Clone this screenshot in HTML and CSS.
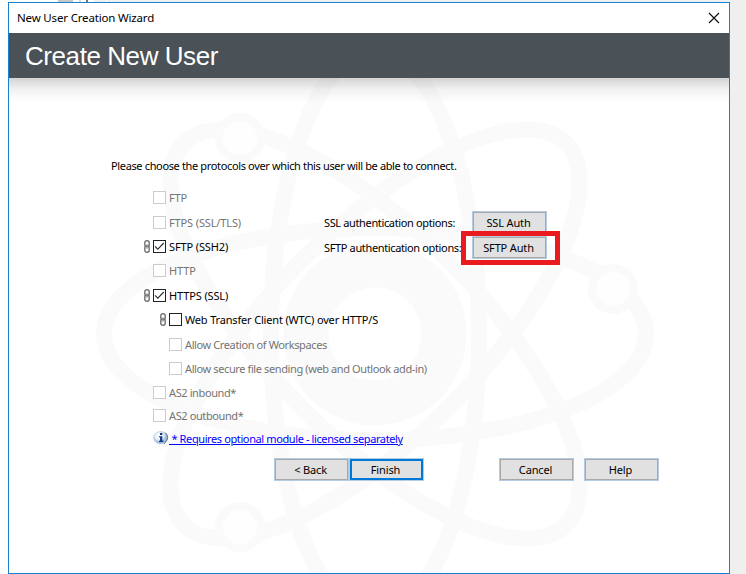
FILE: index.html
```html
<!DOCTYPE html>
<html lang="en">
<head>
<meta charset="utf-8">
<title>New User Creation Wizard</title>
<link rel="stylesheet" href="styles.css">
</head>
<body>
<div class="backdrop"><i class="chip"></i><i class="line"></i><i class="mark"></i><i class="pane"></i></div>
<main class="window">
  <div class="titlebar">
    <span class="caption">New User Creation Wizard</span>
    <svg class="close" width="12" height="12" viewBox="0 0 12 12"><path d="M1 1l10 10M11 1L1 11" stroke="#111" stroke-width="1.2" fill="none"/></svg>
  </div>
  <header class="banner"><h1>Create New User</h1></header>
  <div class="content">
    <svg class="atom" width="720" height="495" viewBox="9 78 720 495">
      <g fill="none" stroke="#fafafa" stroke-width="16">
        <ellipse cx="375" cy="334" rx="271" ry="106"/>
        <ellipse cx="375" cy="334" rx="270" ry="104" transform="rotate(45 375 334)"/>
        <ellipse cx="375" cy="334" rx="104" ry="283"/>
        <ellipse cx="375" cy="334" rx="270" ry="104" transform="rotate(135 375 334)"/>
      </g>
      <circle cx="375" cy="334" r="69" fill="#fff" stroke="#fafafa" stroke-width="45"/>
      <g fill="#fefefe" stroke="#fafafa" stroke-width="8">
        <circle cx="240" cy="138" r="21"/><circle cx="613" cy="289" r="21"/><circle cx="240" cy="527" r="21"/>
      </g>
    </svg>
    <div class="shade"></div>
    <div class="form">
      <p class="intro">Please choose the protocols over which this user will be able to connect.</p>
      <div class="columns">
        <ul class="protocols">
          <li class="off"><i class="gap"></i><i class="box"></i><span class="caps">FTP</span></li>
          <li class="off h24"><i class="gap"></i><i class="box"></i><span class="caps">FTPS (SSL/TLS)</span></li>
          <li class="h24"><svg class="link-icon" viewBox="0 0 6 13"><use href="#chain"/></svg><i class="box"><svg viewBox="0 0 11 11"><use href="#tick"/></svg></i><span class="caps">SFTP (SSH2)</span></li>
          <li class="off"><i class="gap"></i><i class="box"></i><span class="caps">HTTP</span></li>
          <li class="h24"><svg class="link-icon" viewBox="0 0 6 13"><use href="#chain"/></svg><i class="box"><svg viewBox="0 0 11 11"><use href="#tick"/></svg></i><span class="caps">HTTPS (SSL)</span></li>
          <li class="sub"><svg class="link-icon" viewBox="0 0 6 13"><use href="#chain"/></svg><i class="box"></i><span class="mixed">Web Transfer Client (WTC) over HTTP/S</span></li>
          <li class="sub off h24"><i class="gap"></i><i class="box"></i><span>Allow Creation of Workspaces</span></li>
          <li class="sub off h24"><i class="gap"></i><i class="box"></i><span>Allow secure file sending (web and Outlook add-in)</span></li>
          <li class="off h23"><i class="gap"></i><i class="box"></i><span>AS2 inbound*</span></li>
          <li class="off h23"><i class="gap"></i><i class="box"></i><span>AS2 outbound*</span></li>
          <li class="module"><i class="gap"></i><svg class="info" viewBox="0 0 16 14"><defs><radialGradient id="orb" cx=".4" cy=".35"><stop offset="0" stop-color="#fff"/><stop offset=".65" stop-color="#e2edf8"/><stop offset="1" stop-color="#9ebcdc"/></radialGradient></defs><ellipse cx="7.6" cy="6.7" rx="7" ry="6.2" fill="url(#orb)" stroke="#b5c5d8" stroke-width=".7"/><path d="M12.5 1.8Q17 6.5 12.2 11.5L11 13" fill="none" stroke="#5e6f89" stroke-width="1"/><path d="M7 2h2.3v2H7zM6 5.2h3.3v4.6h1.1V11H6V9.8h1.1V6.3H6z" fill="#14347c"/></svg><a>&nbsp;* Requires optional module - licensed separately</a></li>
        </ul>
        <div class="auth">
          <div class="auth-row"><span>SSL authentication options:</span><button>SSL Auth</button></div>
          <div class="auth-row"><span>SFTP authentication options:</span><button>SFTP Auth</button><div class="highlight"></div></div>
        </div>
      </div>
      <div class="actions"><button>&lt; Back</button><button class="primary">Finish</button><button class="cancel">Cancel</button><button class="help">Help</button></div>
    </div>
  </div>
</main>
<svg width="0" height="0" class="defs"><defs>
  <g id="chain" fill="none"><rect x=".8" y=".7" width="4.4" height="6" rx="2" stroke="#707070" stroke-width="1.4"/><rect x=".8" y="6" width="4.4" height="6.3" rx="2" stroke="#707070" stroke-width="1.4"/><path d="M3 4v5" stroke="#999"/></g>
  <path id="tick" d="M1 5.3l2.8 2.8L9.8 2" fill="none" stroke="#333" stroke-width="1.2"/>
</defs></svg>
</body>
</html>
```
FILE: styles.css
```css
* { box-sizing: border-box; }
body { margin: 0; width: 746px; height: 574px; overflow: hidden; position: relative; background: linear-gradient(90deg, #fff 9px, #efefef 9px); font: 11px/13px "Noto Sans", sans-serif; color: #000; }
.backdrop { height: 2px; display: flex; padding-left: 58px; background: linear-gradient(90deg, #fff 107px, #efefef 107px); }
.backdrop i { height: 2px; }
.chip { width: 15px; background: #c8c8c8; }
.line { width: 2px; margin-left: 6px; background: #ddd; }
.mark { width: 2px; margin-left: 5px; background: #777; }
.pane { width: 12px; margin-left: 6px; background: #eee; }
.window { width: 722px; height: 572px; margin-left: 8px; border: 1px solid #1a80d0; background: #fff; }
.titlebar { height: 30px; display: flex; align-items: center; justify-content: space-between; padding: 0 9px 2px 8px; }
.close { position: relative; top: 1px; }
.caption { font-size: 11.5px; letter-spacing: -.17px; }
.banner { height: 45px; background: #4a5157; display: flex; align-items: center; padding-left: 16px; }
h1 { margin: 0; font: 26px/30px "Liberation Sans", sans-serif; letter-spacing: -.43px; color: #fff; }
.content { position: relative; height: 495px; }
.atom { position: absolute; inset: 0; }
.shade { position: absolute; inset: 0 0 auto; height: 24px; background: linear-gradient(rgba(0,0,0,.17), rgba(0,0,0,.05) 50%, transparent); }
.form { position: relative; padding: 81px 0 0 102px; }
.intro { margin: 0 0 13px; height: 13px; white-space: nowrap; letter-spacing: -.355px; }
.columns { display: flex; height: 273px; }
.protocols { list-style: none; margin: 0; padding: 0 0 0 33px; width: 213px; white-space: nowrap; letter-spacing: -.39px; }
li { height: 25px; padding-top: 6px; display: flex; align-items: flex-start; }
.h24 { height: 24px; }
.h23 { height: 23px; }
.off { color: #747474; }
.sub { padding-left: 16px; }
.caps { letter-spacing: -.13px; }
.mixed { letter-spacing: -.17px; }
.gap, .link-icon { width: 6px; height: 13px; margin-right: 3px; flex: none; }
.box { width: 13px; height: 13px; margin-right: 3px; border: 1px solid #222; background: #fff; flex: none; }
.box svg { display: block; width: 11px; height: 11px; }
.off .box { border-color: #ccc; }
.info { width: 16px; height: 14px; flex: none; margin-top: -1px; }
.module a { color: #00f; text-decoration: underline; }
.auth { padding-top: 26px; letter-spacing: -.36px; }
.auth-row { position: relative; height: 25px; display: flex; align-items: flex-start; white-space: nowrap; }
.auth-row span { width: 148px; padding-top: 5px; }
button { width: 75px; height: 23px; padding: 0 2px 1px 0; border: 1px solid #b3cce4; box-shadow: inset 0 0 0 1px #a8a8a8; background: #e1e1e1; color: #000; font: inherit; letter-spacing: -.15px; }
.highlight { position: absolute; left: 137px; top: -5px; width: 99px; height: 34px; border: 5px solid #ea1b1e; }
.actions { display: flex; margin-left: 163px; }
.primary { box-shadow: inset 0 0 0 2px #0078d7; }
.cancel { margin-left: 75px; }
.help { margin-left: 10px; }
.defs { position: absolute; }
```
